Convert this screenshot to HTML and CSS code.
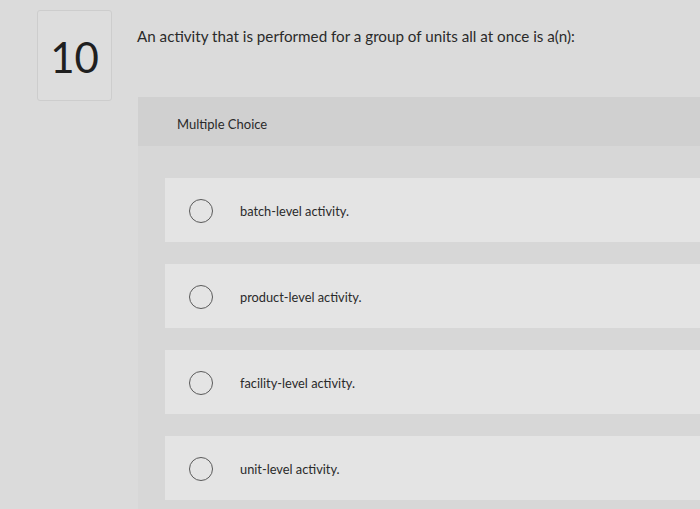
FILE: index.html
```html
<!DOCTYPE html>
<html>
<head>
<meta charset="utf-8">
<link rel="stylesheet" href="styles.css">
</head>
<body>
<div class="page">
  <div class="top">
    <div class="num">10</div>
    <div class="question">An activity that is performed for a group of units all at once is a(n):</div>
  </div>
  <div class="panel">
    <div class="panel-head">Multiple Choice</div>
    <div class="options">
      <div class="opt"><span class="radio"></span><span class="label">batch-level activity.</span></div>
      <div class="opt"><span class="radio"></span><span class="label">product-level activity.</span></div>
      <div class="opt"><span class="radio"></span><span class="label">facility-level activity.</span></div>
      <div class="opt"><span class="radio"></span><span class="label">unit-level activity.</span></div>
    </div>
  </div>
</div>
</body>
</html>
```

FILE: styles.css
```css
html, body {
  margin: 0;
  padding: 0;
  background: #dbdbdb;
  font-family: Lato, "Open Sans", sans-serif;
  color: #222;
}
.page {
  width: 700px;
  height: 509px;
  overflow: hidden;
  display: flex;
  flex-direction: column;
}
.top {
  display: flex;
  align-items: flex-start;
  padding-top: 10px;
  padding-left: 37px;
  height: 97px;
  box-sizing: border-box;
  flex: none;
}
.num {
  width: 75px;
  height: 91px;
  border: 1px solid #cdcdcd;
  border-radius: 3px;
  background: #dddddd;
  display: flex;
  align-items: center;
  justify-content: center;
  font-size: 42px;
  color: #1f1f1f;
  padding-top: 2px;
  box-sizing: border-box;
  flex: none;
}
.question {
  margin-left: 25px;
  margin-top: 17px;
  font-size: 15.2px;
  color: #2a2a2a;
}
.panel {
  margin-left: 138px;
  flex: 1;
  background: #d7d7d7;
  display: flex;
  flex-direction: column;
}
.panel-head {
  height: 49px;
  box-sizing: border-box;
  padding-top: 5px;
  background: #d0d0d0;
  font-size: 13px;
  padding-left: 39px;
  display: flex;
  align-items: center;
  color: #2a2a2a;
  margin-bottom: 32px;
}
.options {
  display: flex;
  flex-direction: column;
  gap: 22px;
  margin-left: 27px;
}
.opt {
  height: 64px;
  background: #e4e4e4;
  display: flex;
  align-items: center;
  padding-left: 24px;
  padding-top: 1px;
  box-sizing: border-box;
}
.radio {
  width: 24px;
  height: 24px;
  border: 1.5px solid #5a5a5a;
  border-radius: 50%;
  flex: none;
  box-sizing: border-box;
}
.label {
  margin-left: 27px;
  font-size: 12.8px;
  color: #2a2a2a;
}
```
